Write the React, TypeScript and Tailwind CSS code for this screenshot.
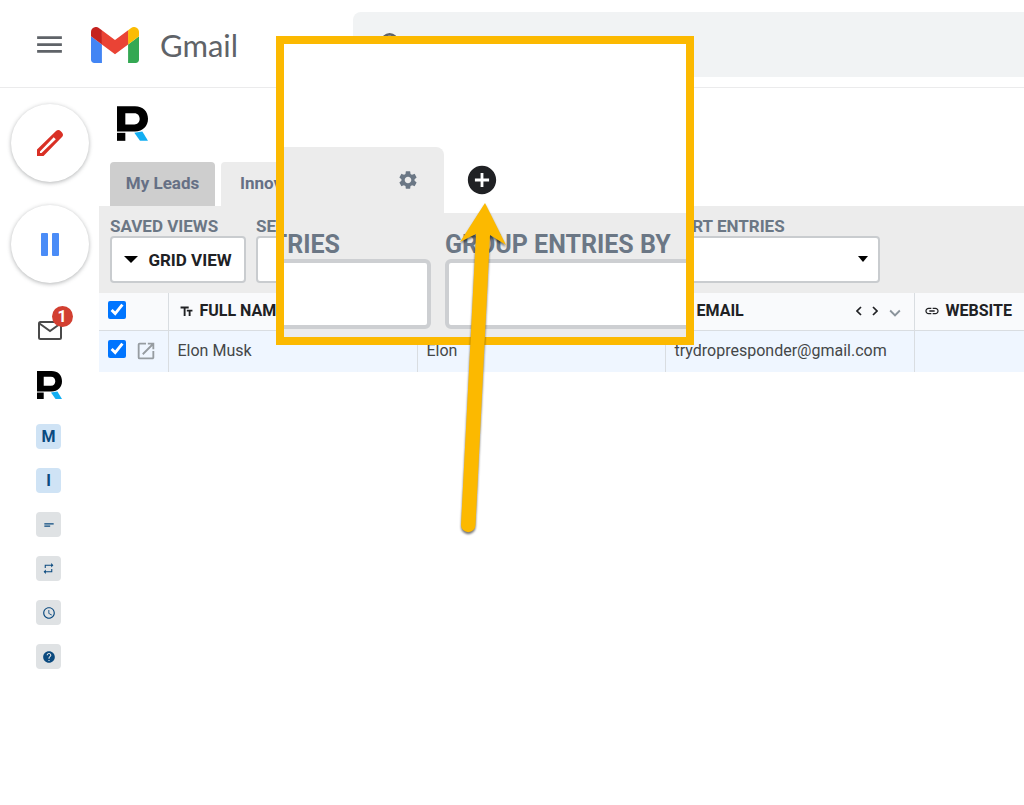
import type { ReactNode } from "react";
import {
  MdAccessTime,
  MdAddCircle,
  MdExpandMore,
  MdHelp,
  MdLink,
  MdMenu,
  MdOpenInNew,
  MdRepeat,
  MdSearch,
  MdSettings,
  MdShortText,
  MdTextFields,
} from "react-icons/md";

type Lead = {
  id: string;
  fullName: string;
  firstName: string;
  email: string;
  website: string;
};

const leads: Array<Lead> = [
  { id: "1", fullName: "Elon Musk", firstName: "Elon", email: "trydropresponder@gmail.com", website: "" },
];

function GmailLogo() {
  return (
    <svg viewBox="52 42 88 66" className="h-9 w-12" aria-hidden="true">
      <path fill="#4285f4" d="M58 108h14V74L52 59v43c0 3.32 2.69 6 6 6" />
      <path fill="#34a853" d="M120 108h14c3.32 0 6-2.69 6-6V59l-20 15" />
      <path fill="#fbbc04" d="M120 48v26l20-15v-8c0-7.42-8.47-11.65-14.4-7.2" />
      <path fill="#ea4335" d="M72 74V48l24 18 24-18v26L96 92" />
      <path fill="#c5221f" d="M52 51v8l20 15V48l-5.6-4.2c-5.94-4.45-14.4-.22-14.4 7.2" />
    </svg>
  );
}

function BrandLogo({ className }: { className: string }) {
  return (
    <svg viewBox="0 0 93 104" className={className} aria-hidden="true">
      <path fillRule="evenodd" d="M0 0H54C78 0 93 15 93 38C93 60 78 76 54 76H0ZM25 21V55H52C62 55 68 48 68 38C68 28 62 21 52 21Z" />
      <path d="M0 80H25V104H0Z" />
      <path fill="#12aef2" d="M52 80L76 76L93 104H69Z" />
    </svg>
  );
}

function Header() {
  return (
    <header className="flex h-[88px] items-center border-b border-[#ebebec] pt-0.5">
      <button type="button" aria-label="Main menu" className="ml-[33px] text-[#5f6368]">
        <MdMenu size={33} />
      </button>
      <a href="#inbox" className="ml-[25px] flex items-center gap-[21px]">
        <GmailLogo />
        <span className="w-[193px] font-['Lato',sans-serif] text-[31px] leading-9 text-[#5f6368]">Gmail</span>
      </a>
      <div className="flex h-[65px] flex-1 items-center rounded-l-lg bg-[#f1f3f4] pl-6">
        <MdSearch size={32} className="text-[#5f6368]" />
        <input type="search" aria-label="Search mail" className="h-full flex-1 bg-transparent px-4 outline-none" />
      </div>
    </header>
  );
}

function AppTile({ label, active, children }: { label: string; active?: boolean; children: ReactNode }) {
  return (
    <button
      type="button"
      aria-label={label}
      className={`flex size-[25px] items-center justify-center rounded text-base leading-none font-bold text-[#0b4a7f] ${
        active ? "bg-[#cfe3f5]" : "bg-[#dfe2e4]"
      }`}
    >
      {children}
    </button>
  );
}

function Sidebar() {
  return (
    <aside className="flex w-[99px] shrink-0 flex-col items-center pt-4">
      <button
        type="button"
        aria-label="Compose"
        className="flex size-[78px] items-center justify-center rounded-full bg-white shadow-[0_1px_4px_rgba(60,64,67,0.4)]"
      >
        <svg viewBox="0 0 26 26" className="size-[26px]" aria-hidden="true">
          <path
            fill="#d93025"
            fillRule="evenodd"
            d="M0 19.500L19 1Q21.500-1 23.800 1.200L25 2.400Q27 4.800 25 7L6.500 26H0ZM3 21.500V23H4.500L18.800 9.300L16.700 7.200Z"
          />
        </svg>
      </button>
      <button
        type="button"
        aria-label="Pause inbox"
        className="mt-[23px] flex size-[78px] items-center justify-center gap-1 rounded-full bg-white shadow-[0_1px_4px_rgba(60,64,67,0.4)]"
      >
        <span className="h-[23px] w-[7px] rounded-[1px] bg-[#4a8cf7]" />
        <span className="h-[23px] w-[7px] rounded-[1px] bg-[#4a8cf7]" />
      </button>
      <a href="#inbox" aria-label="Inbox, 1 unread" className="relative mt-[37px]">
        <svg viewBox="0 0 24 20" className="h-5 w-6" fill="none" stroke="#4a4a4a" strokeWidth="2" aria-hidden="true">
          <rect x="1" y="2" width="22" height="17" rx="1.5" />
          <path d="M1.500 3.500L12 11L22.500 3.500" />
        </svg>
        <span className="absolute -top-3.5 left-3.5 flex size-[21px] items-center justify-center rounded-full bg-[#d23f31] text-base leading-none font-bold text-white">
          1
        </span>
      </a>
      <BrandLogo className="mt-[31px] h-7 w-[25px]" />
      <nav className="mt-[25px] flex flex-col gap-[19px] pr-0.5">
        <AppTile label="My Leads" active>
          M
        </AppTile>
        <AppTile label="Innovators" active>
          I
        </AppTile>
        <AppTile label="Templates">
          <MdShortText size={14} />
        </AppTile>
        <AppTile label="Sequences">
          <MdRepeat size={13} />
        </AppTile>
        <AppTile label="Scheduled">
          <MdAccessTime size={14} />
        </AppTile>
        <AppTile label="Help">
          <MdHelp size={14} />
        </AppTile>
      </nav>
    </aside>
  );
}

function Caret() {
  return (
    <svg viewBox="0 0 14 7" className="h-[7px] w-3.5" aria-hidden="true">
      <path d="M0 0H14L7 7Z" />
    </svg>
  );
}

function Toolbar() {
  return (
    <div className="flex gap-2.5 bg-[#ececec] px-[11px] py-2.5 text-[17px] leading-5 font-bold text-[#6b7785]">
      <div className="flex w-[136px] flex-col">
        <span>SAVED VIEWS</span>
        <button
          type="button"
          className="flex h-[47px] items-center justify-center gap-2.5 rounded border-2 border-[#c9cccf] bg-white text-[#202124]"
        >
          <Caret />
          GRID VIEW
        </button>
      </div>
      <div className="flex w-[197px] flex-col">
        <label htmlFor="search">SEARCH ENTRIES</label>
        <input id="search" className="h-[47px] rounded border-2 border-[#c9cccf] bg-white px-3" />
      </div>
      <div className="flex w-[197px] flex-col">
        <label htmlFor="group">GROUP ENTRIES BY</label>
        <select id="group" className="h-[47px] appearance-none rounded border-2 border-[#c9cccf] bg-white px-3" />
      </div>
      <div className="flex w-[210px] flex-col">
        <label htmlFor="sort">SORT ENTRIES</label>
        <div className="relative">
          <select id="sort" className="block h-[47px] w-full appearance-none rounded border-2 border-[#c9cccf] bg-white px-3" />
          <svg viewBox="0 0 10 6" className="pointer-events-none absolute top-5 right-3 h-1.5 w-2.5" aria-hidden="true">
            <path d="M0 0H10L5 6Z" />
          </svg>
        </div>
      </div>
    </div>
  );
}

function MoveIcon({ d }: { d: string }) {
  return (
    <svg viewBox="0 0 6 10" className="h-2.5 w-1.5" fill="none" stroke="currentColor" strokeWidth="1.7" aria-hidden="true">
      <path d={d} />
    </svg>
  );
}

function LeadsTable() {
  return (
    <table className="w-full table-fixed border-collapse text-left text-base leading-5">
      <colgroup>
        <col className="w-[69px]" />
        <col className="w-[249px]" />
        <col className="w-[248px]" />
        <col className="w-[249px]" />
        <col />
      </colgroup>
      <thead>
        <tr className="h-[37px] border-b border-[#d9dde1] bg-[#f9fafc] text-[#202124]">
          <th className="border-r border-[#d9dde1] pb-0.5 pl-[9px]">
            <input type="checkbox" defaultChecked aria-label="Select all" className="block size-[18px] accent-[#0075ff]" />
          </th>
          <th className="border-r border-[#d9dde1] pl-2.5">
            <span className="flex items-center gap-1.5 whitespace-nowrap">
              <MdTextFields size={15} />
              FULL NAME
            </span>
          </th>
          <th className="border-r border-[#d9dde1] pl-2.5">
            <span className="flex items-center gap-1.5 whitespace-nowrap">
              <MdTextFields size={15} />
              FIRST NAME
            </span>
          </th>
          <th className="border-r border-[#d9dde1] pr-2 pl-2.5">
            <span className="flex h-5 items-center">
              <MdTextFields size={15} />
              <span className="ml-1.5 flex-1">EMAIL</span>
              <button type="button" aria-label="Move left">
                <MoveIcon d="M5 1L1 5L5 9" />
              </button>
              <button type="button" aria-label="Move right" className="ml-2.5">
                <MoveIcon d="M1 1L5 5L1 9" />
              </button>
              <button type="button" aria-label="Column options" className="ml-1.5 pt-1 text-[#8b949c]">
                <MdExpandMore size={22} />
              </button>
            </span>
          </th>
          <th className="pl-[9px]">
            <span className="flex items-center gap-1.5">
              <MdLink size={16} />
              WEBSITE
            </span>
          </th>
        </tr>
      </thead>
      <tbody>
        {leads.map((lead) => (
          <tr key={lead.id} className="h-[42px] bg-[#eff6ff] text-[#444748]">
            <td className="border-r border-[#d9dde1] pl-[9px]">
              <div className="flex items-center gap-[9px]">
                <input
                  type="checkbox"
                  defaultChecked
                  aria-label={`Select ${lead.fullName}`}
                  className="mb-1 size-[18px] accent-[#0075ff]"
                />
                <a href="#lead" aria-label={`Open ${lead.fullName}`} className="text-[#969ca1]">
                  <MdOpenInNew size={22} />
                </a>
              </div>
            </td>
            <td className="border-r border-[#d9dde1] pl-[9px]">{lead.fullName}</td>
            <td className="border-r border-[#d9dde1] pl-[9px]">{lead.firstName}</td>
            <td className="border-r border-[#d9dde1] pl-[9px]">{lead.email}</td>
            <td className="pl-[9px]">{lead.website}</td>
          </tr>
        ))}
      </tbody>
    </table>
  );
}

function Magnifier() {
  return (
    <div className="absolute top-9 left-[276px] flex h-[309px] w-[418px] flex-col overflow-hidden border-8 border-[#fcb900] bg-white text-[25px] leading-7 font-bold text-[#6b7785]">
      <div className="mt-[103px] flex h-[66px] items-center">
        <div className="flex h-full w-40 items-center justify-end rounded-tr-lg bg-[#ececec] pr-[25px]">
          <button type="button" aria-label="Tab settings">
            <MdSettings size={22} />
          </button>
        </div>
        <button type="button" aria-label="Add tab" className="ml-[21px] text-[#202124]">
          <MdAddCircle size={34} />
        </button>
      </div>
      <div className="flex flex-1 gap-3.5 bg-[#ececec] pt-[18px]">
        <div className="flex w-[147px] shrink-0 flex-col items-end">
          <label htmlFor="search-large" className="pr-[91px] whitespace-nowrap">
            SEARCH ENTRIES
          </label>
          <input id="search-large" className="h-[70px] w-[300px] rounded-md border-4 border-[#cdcfd2] bg-white px-4" />
        </div>
        <div className="flex w-[300px] shrink-0 flex-col">
          <label htmlFor="group-large">GROUP ENTRIES BY</label>
          <select id="group-large" className="h-[70px] appearance-none rounded-md border-4 border-[#cdcfd2] bg-white" />
        </div>
      </div>
    </div>
  );
}

function Arrow() {
  return (
    <svg
      viewBox="0 0 60 345"
      className="pointer-events-none absolute top-[200px] left-[455px] h-[345px] w-[60px] drop-shadow-[0_2px_1px_rgba(0,0,0,0.55)]"
      aria-hidden="true"
    >
      <path fill="#fcb900" d="M30 3L51 45L35 35L20.500 325A7.200 7.200 0 0 1 6 325L21 34L5 42Z" />
    </svg>
  );
}

export default function App() {
  return (
    <div className="relative min-h-screen overflow-hidden bg-white font-['Roboto',sans-serif]">
      <Header />
      <div className="flex">
        <Sidebar />
        <main className="min-w-0 flex-1">
          <div className="pt-[18px] pl-[18px]">
            <BrandLogo className="h-[35px] w-[31px]" />
          </div>
          <div role="tablist" className="mt-[21px] flex gap-1.5 pl-[11px] text-[17px] font-bold text-[#667085]">
            <button type="button" role="tab" className="h-11 w-[105px] rounded-t bg-[#cecece]">
              My Leads
            </button>
            <button type="button" role="tab" aria-selected="true" className="h-11 w-[140px] rounded-t bg-[#ececec] pl-[19px] text-left">
              Innovators
            </button>
          </div>
          <Toolbar />
          <LeadsTable />
        </main>
      </div>
      <Magnifier />
      <Arrow />
    </div>
  );
}
